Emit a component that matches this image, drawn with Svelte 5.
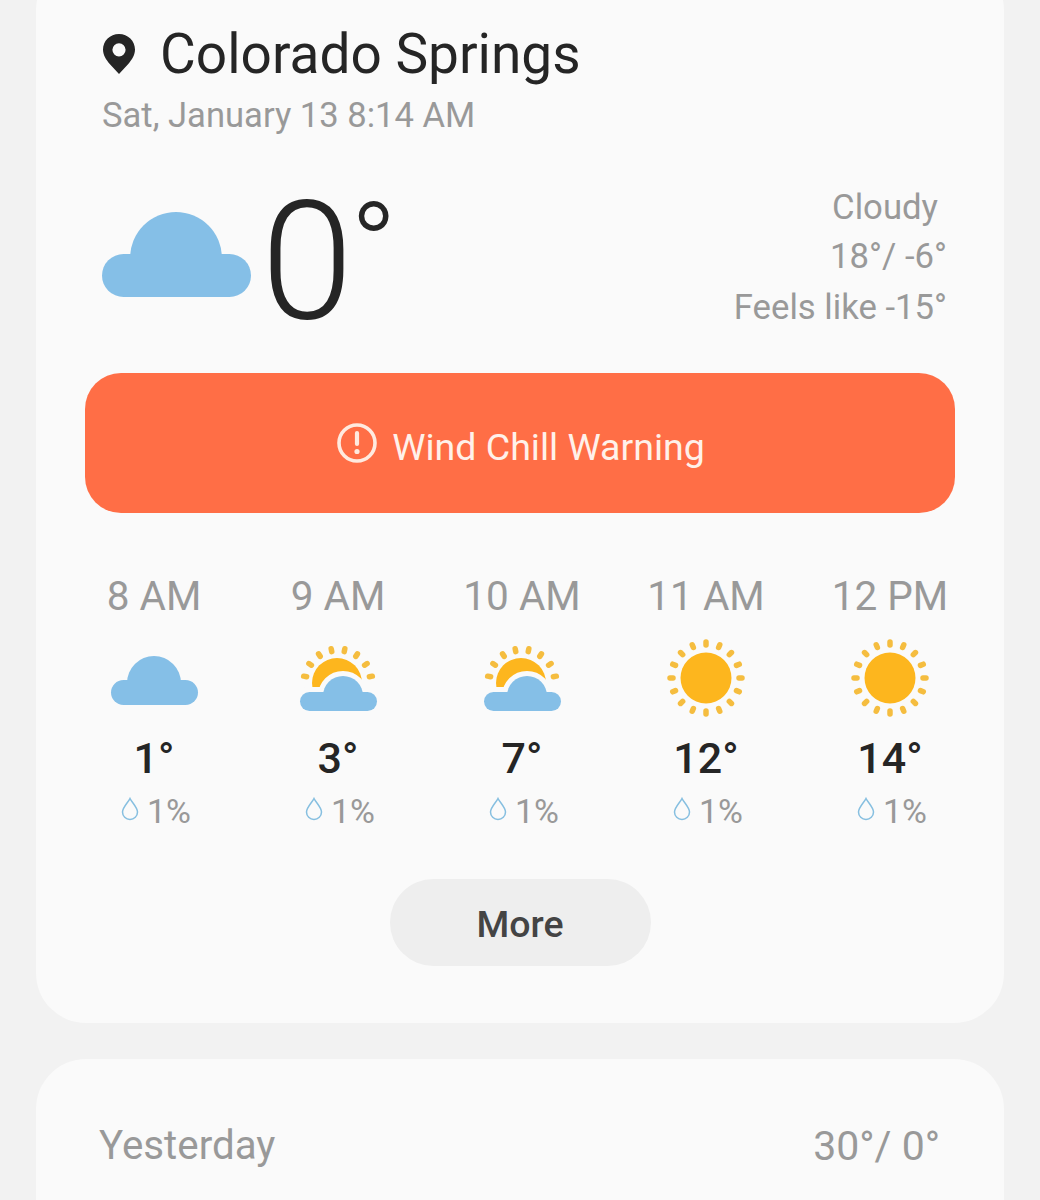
<script>
    const hours = [
        { time: "8 AM", icon: "cloud", temp: "1°" },
        { time: "9 AM", icon: "partly", temp: "3°" },
        { time: "10 AM", icon: "partly", temp: "7°" },
        { time: "11 AM", icon: "sun", temp: "12°" },
        { time: "12 PM", icon: "sun", temp: "14°" }
    ];
    const sunRays = Array.from({ length: 16 }, (_, i) => i * 22.5);
    const arcRays = Array.from({ length: 8 }, (_, i) => -78.75 + i * 22.5);
</script>

<main class="page">
    <section class="card today">
        <div class="location">
            <svg class="pin" viewBox="0 0 32 40" aria-hidden="true">
                <path fill-rule="evenodd" d="M16 0C7 0 0 6.900 0 15.600c0 5.600 3.200 10.200 6.500 14.200L16 40l9.500-10.200c3.300-4 6.500-8.600 6.500-14.200C32 6.900 25 0 16 0zm0 9.200a6.600 6.600 0 1 1 0 13.200 6.600 6.600 0 0 1 0-13.200z" />
            </svg>
            <h1>Colorado Springs</h1>
        </div>
        <p class="date">Sat, January 13 8:14 AM</p>

        <div class="now">
            <svg class="big-cloud" viewBox="0 0 149 85" aria-hidden="true">
                <path d="M28 46a46 46 0 0 1 92 0z" fill="#85bfe7" />
                <rect x="0" y="42" width="149" height="43" rx="21.500" fill="#85bfe7" />
            </svg>
            <div class="big-temp">0<span class="deg">°</span></div>
            <div class="summary">
                <div class="cond">Cloudy</div>
                <div>18°/ -6°</div>
                <div>Feels like -15°</div>
            </div>
        </div>

        <div class="alert">
            <svg class="alert-icon" viewBox="0 0 40 40" aria-hidden="true">
                <circle cx="20" cy="20" r="18" fill="none" stroke="#ffeadf" stroke-width="3.600" />
                <path d="M20 10v11" stroke="#ffeadf" stroke-width="4.200" stroke-linecap="round" />
                <circle cx="20" cy="28.500" r="2.600" fill="#ffeadf" />
            </svg>
            <span class="alert-text">Wind Chill Warning</span>
        </div>

        <div class="hours">
            {#each hours as hour}
                <div class="hour">
                    <div class="time">{hour.time}</div>
                    <svg class="weather" viewBox="0 0 90 80" aria-hidden="true">
                        {#if hour.icon === "cloud"}
                            <path d="M18 45a27 27 0 0 1 54 0z" fill="#85bfe7" />
                            <rect x="2" y="42" width="87" height="25" rx="12.500" fill="#85bfe7" />
                        {:else if hour.icon === "partly"}
                            {#each arcRays as a}
                                <line x1="45" y1="10" x2="45" y2="13" transform="rotate({a} 45 45)" class="ray" />
                            {/each}
                            <circle cx="44" cy="45" r="25" fill="#fdb61e" />
                            <path d="M30 58a20 20 0 0 1 40 0z" class="halo" />
                            <rect x="7" y="54" width="77" height="19" rx="9.500" class="halo" />
                            <path d="M30 58a20 20 0 0 1 40 0z" fill="#85bfe7" />
                            <rect x="7" y="54" width="77" height="19" rx="9.500" fill="#85bfe7" />
                        {:else}
                            {#each sunRays as a}
                                <line x1="45" y1="4" x2="45" y2="7" transform="rotate({a} 45 40)" class="ray" />
                            {/each}
                            <circle cx="45" cy="40" r="25.500" fill="#fdb61e" />
                        {/if}
                    </svg>
                    <div class="temp">{hour.temp}</div>
                    <div class="rain">
                        <svg class="drop" viewBox="0 0 18 24" aria-hidden="true">
                            <path d="M9 1.500C7 5.500 1.500 10.500 1.500 15a7.500 7.500 0 0 0 15 0C16.500 10.500 11 5.500 9 1.500z" />
                        </svg>
                        <span>1%</span>
                    </div>
                </div>
            {/each}
        </div>

        <div class="more-row">
            <button class="more">More</button>
        </div>
    </section>

    <section class="card past">
        <span>Yesterday</span>
        <span class="past-temp">30°/ 0°</span>
    </section>
</main>

<style>
    :global(body) {
        background: #f2f2f2;
    }
    .page {
        height: 1200px;
        overflow: hidden;
        box-sizing: border-box;
        padding: 0 36px;
        font-family: Roboto, "Liberation Sans", sans-serif;
        color: #252525;
    }
    .card {
        background: #fafafa;
        border-radius: 50px;
    }
    .today {
        height: 1063px;
        margin-top: -40px;
        box-sizing: border-box;
        padding: 64px 49px 0;
    }
    .location {
        display: flex;
        align-items: center;
        margin-left: 18px;
        height: 60px;
    }
    .pin {
        width: 32px;
        height: 40px;
        fill: #252525;
        margin-right: 25px;
    }
    h1 {
        margin: 0;
        font-size: 55px;
        font-weight: 400;
        line-height: 60px;
    }
    .date {
        margin: 11px 0 0 17px;
        font-size: 34.600px;
        line-height: 40px;
        color: #999;
    }
    .now {
        display: flex;
        align-items: flex-start;
        margin: 38px 8px 0 17px;
        height: 200px;
    }
    .big-cloud {
        width: 149px;
        height: 85px;
        margin-top: 39px;
    }
    .big-temp {
        margin-left: 10px;
        font-size: 166px;
        font-weight: 300;
        line-height: 180px;
        margin-top: -1px;
    }
    .deg {
        font-size: 125px;
        line-height: 0;
        vertical-align: 27px;
        margin-left: -3px;
    }
    .summary {
        margin-left: auto;
        text-align: right;
        font-size: 34.700px;
        line-height: 51px;
        color: #999;
        margin-top: 7px;
    }
    .cond {
        padding-right: 9px;
        margin: 2px 0 -2px;
    }
    .alert {
        height: 140px;
        background: #ff6e46;
        border-radius: 36px;
        display: flex;
        align-items: center;
        justify-content: center;
        gap: 15px;
        padding-left: 2px;
        box-sizing: border-box;
        font-size: 37.500px;
        color: #fff1ea;
    }
    .alert-icon {
        width: 40px;
        height: 40px;
    }
    .alert-text {
        margin-top: 8px;
    }
    .hours {
        display: grid;
        grid-template-columns: repeat(5, 184px);
        margin: 59px -23px 0;
    }
    .hour {
        display: flex;
        flex-direction: column;
        align-items: center;
    }
    .time {
        font-size: 40.500px;
        line-height: 48px;
        color: #999;
    }
    .weather {
        width: 90px;
        height: 80px;
        margin-top: 18px;
    }
    .ray {
        stroke: #f5bd3f;
        stroke-width: 5.500;
        stroke-linecap: round;
    }
    .halo {
        fill: #fafafa;
        stroke: #fafafa;
        stroke-width: 10;
    }
    .temp {
        font-size: 43px;
        font-weight: 500;
        line-height: 50px;
        margin-top: 15px;
    }
    .rain {
        display: flex;
        align-items: center;
        gap: 8px;
        margin-left: 4px;
        font-size: 34px;
        line-height: 42px;
        color: #999;
        margin-top: 7px;
    }
    .drop {
        width: 18px;
        height: 24px;
        fill: none;
        stroke: #86bfe0;
        stroke-width: 1.500;
        margin-top: -4px;
    }
    .more-row {
        display: flex;
        justify-content: center;
        margin-top: 47px;
    }
    .more {
        width: 261px;
        height: 87px;
        border: none;
        border-radius: 44px;
        background: #eeeeee;
        padding: 2px 0 0;
        font-family: inherit;
        font-size: 37.500px;
        font-weight: 500;
        color: #444;
    }
    .past {
        display: flex;
        justify-content: space-between;
        margin-top: 36px;
        height: 200px;
        box-sizing: border-box;
        padding: 65px 64px 0 63px;
        font-size: 40.300px;
        line-height: 44px;
        color: #999;
    }
    .past-temp {
        font-size: 41px;
    }
</style>
